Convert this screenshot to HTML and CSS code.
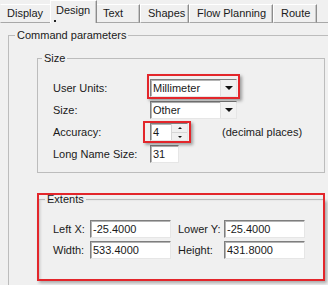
FILE: index.html
```html
<!DOCTYPE html>
<html lang="en">
<head>
  <meta charset="UTF-8" />
  <title>Design Options</title>
  <link rel="stylesheet" href="styles.css">
</head>
<body>
  <div class="tabs">
    <div class="tab tab-display">Display</div>
    <div class="tab tab-design active">Design<span class="dot"></span></div>
    <div class="tab tab-text">Text</div>
    <div class="tab tab-shapes">Shapes</div>
    <div class="tab tab-flow">Flow Planning</div>
    <div class="tab tab-route">Route</div>
  </div>

  <div class="page">
    <fieldset class="group main">
      <legend>Command parameters</legend>
      <div class="inner">

        <fieldset class="group size">
          <legend>Size</legend>
          <div class="size-grid">
            <label>User Units:</label>
            <div class="hl hl-units">
              <div class="combo"><span class="value">Millimeter</span><span class="drop"></span></div>
            </div>

            <label>Size:</label>
            <div class="combo"><span class="value">Other</span><span class="drop"></span></div>

            <label>Accuracy:</label>
            <div class="acc-row">
              <div class="hl hl-spin">
                <div class="spin">
                  <span class="value">4</span>
                  <span class="spin-btns">
                    <span class="spin-btn up"></span>
                    <span class="spin-btn down"></span>
                  </span>
                </div>
              </div>
              <span class="note">(decimal places)</span>
            </div>

            <label>Long Name Size:</label>
            <div class="field short">31</div>
          </div>
        </fieldset>

        <fieldset class="group extents">
          <legend>Extents</legend>
          <div class="ext-grid">
            <label>Left X:</label>
            <div class="field">-25.4000</div>
            <label>Lower Y:</label>
            <div class="field">-25.4000</div>

            <label>Width:</label>
            <div class="field">533.4000</div>
            <label>Height:</label>
            <div class="field">431.8000</div>
          </div>
        </fieldset>

      </div>
    </fieldset>
  </div>
</body>
</html>
```

FILE: styles.css
```css
* {
  margin: 0;
  padding: 0;
  box-sizing: border-box;
}

body {
  background: #f0f0f0;
  font-family: "Liberation Sans", Arial, sans-serif;
  font-size: 11px;
  color: #1a1a1a;
  width: 328px;
  height: 285px;
  overflow: hidden;
}

/* tab strip */

.tabs {
  display: flex;
  align-items: flex-end;
  height: 23px;
  border-bottom: 1px solid #a8a8a8;
}

.tab {
  height: 19px;
  line-height: 17px;
  padding-left: 7px;
  border-top: 1px solid #fff;
  border-left: 1px solid #fff;
  border-right: 1px solid #8c8c8c;
  box-shadow: inset -1px 0 0 #c8c8c8;
  white-space: nowrap;
  margin-bottom: -1px;
  border-bottom: 1px solid #a8a8a8;
}

.tab-display { width: 52px; border-left-color: #f0f0f0; padding-left: 6px; }
.tab-design  { width: 43px; }
.tab-text    { width: 45px; }
.tab-shapes  { width: 49px; }
.tab-flow    { width: 84px; }
.tab-route   { width: 44px; }

.tab.active {
  position: relative;
  width: 47px;
  height: 23px;
  line-height: 19px;
  margin: 0 -2px -1px -2px;
  padding-left: 5px;
  border-bottom: none;
  background: #f0f0f0;
  z-index: 1;
}

.dot {
  position: absolute;
  left: 3px;
  top: 19px;
  width: 2px;
  height: 2px;
  background: #222;
}

/* group boxes */

.group {
  border: 1px solid #bcbcbc;
}

.group legend {
  line-height: 12px;
  padding: 0 2px;
}

.main {
  margin: 6px 0 0 8px;
  width: 330px;
  height: 260px;
  padding-left: 6px;
}

.inner {
  margin-left: 22px;
}

.size {
  margin-top: 11px;
  width: 288px;
  padding: 0 0 9px 4px;
}

.size-grid {
  display: grid;
  grid-template-columns: 97px auto;
  grid-auto-rows: 18px;
  row-gap: 4px;
  margin: 15px 0 0 11px;
}

label {
  display: flex;
  align-items: center;
}

/* inputs */

.field, .combo, .spin {
  height: 18px;
  background: #fff;
  border: 1px solid;
  border-color: #7e7e7e #e6e6e6 #e6e6e6 #7e7e7e;
  box-shadow: inset 1px 1px 0 #b4b4b4;
  line-height: 16px;
  padding-left: 2px;
  white-space: nowrap;
}

.combo {
  width: 87px;
  display: flex;
  justify-content: space-between;
}

.drop {
  width: 16px;
  height: 16px;
  margin-top: 0;
  background: #f2f2f2;
  border-left: 1px solid #e0e0e0;
  position: relative;
}

.drop::after {
  content: "";
  position: absolute;
  left: 4px;
  top: 6px;
  border-left: 4px solid transparent;
  border-right: 4px solid transparent;
  border-top: 4px solid #111;
}

.acc-row {
  display: flex;
  align-items: center;
  gap: 34px;
}

.spin {
  width: 38px;
  display: flex;
  justify-content: space-between;
}

.spin-btns {
  width: 16px;
  display: flex;
  flex-direction: column;
  background: #f0f0f0;
  border-left: 1px solid #d6d6d6;
}

.spin-btn {
  flex: 1;
  position: relative;
}

.spin-btn.up {
  border-bottom: 1px solid #d6d6d6;
}

.spin-btn::after {
  content: "";
  position: absolute;
  left: 6px;
  top: 3px;
  border-left: 2px solid transparent;
  border-right: 2px solid transparent;
}

.spin-btn.up::after {
  border-bottom: 2px solid #111;
}

.spin-btn.down::after {
  border-top: 2px solid #111;
}

.field.short {
  width: 29px;
}

/* highlight boxes */

.hl {
  position: relative;
  width: max-content;
}

.hl::after {
  content: "";
  position: absolute;
  border: 2px solid #e3262b;
  box-shadow: 2px 2px 3px rgba(0, 0, 0, 0.35);
  pointer-events: none;
}

.hl-units::after {
  top: -5px;
  left: -3px;
  right: -3px;
  bottom: -2px;
}

.hl-spin::after {
  top: -2px;
  left: -7px;
  right: -3px;
  bottom: -2px;
}

/* extents */

.extents {
  margin-top: 20px;
  width: 288px;
  height: 88px;
  padding-left: 7px;
  outline: 2px solid #e3262b;
  outline-offset: -2px;
  box-shadow: 2px 2px 3px rgba(0, 0, 0, 0.3), inset 3px 0 3px -1px rgba(0, 0, 0, 0.2);
}

.ext-grid {
  display: grid;
  grid-template-columns: 37px 81px 53px 81px;
  column-gap: 0;
  grid-template-columns: 37px 81px 53px 81px;
  grid-auto-rows: 18px;
  row-gap: 3px;
  margin: 15px 0 0 8px;
}

.ext-grid label:nth-child(3),
.ext-grid label:nth-child(7) {
  padding-left: 7px;
}

.ext-grid .field {
  width: 81px;
}
```
